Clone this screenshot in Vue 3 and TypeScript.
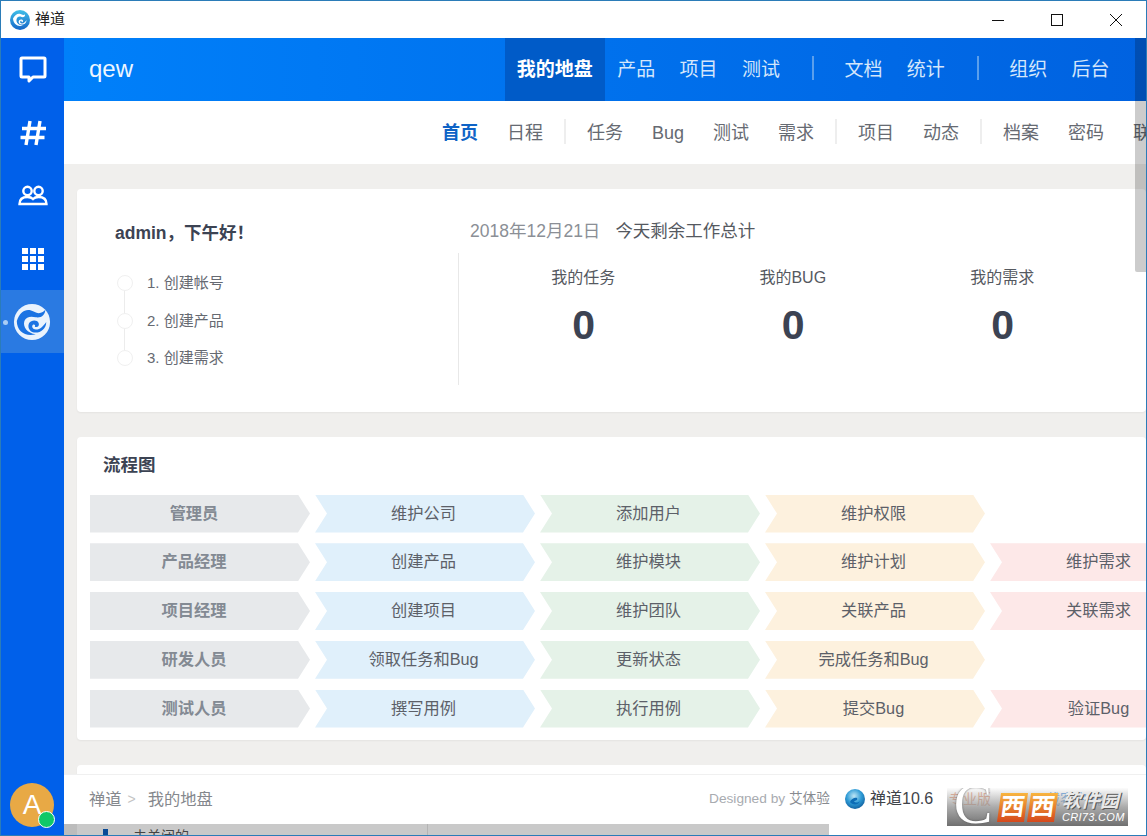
<script setup lang="ts">
interface FlowRow {
  role: string
  steps: string[]
}

const topNav = ['产品', '项目', '测试']
const topNav2 = ['文档', '统计']
const topNav3 = ['组织', '后台']

const subGroups: string[][] = [
  ['日程'],
  ['任务', 'Bug', '测试', '需求'],
  ['项目', '动态'],
  ['档案', '密码', '联系人'],
]

const todos = ['1. 创建帐号', '2. 创建产品', '3. 创建需求']

const stats = [
  { label: '我的任务', value: 0 },
  { label: '我的BUG', value: 0 },
  { label: '我的需求', value: 0 },
]

const flows: FlowRow[] = [
  { role: '管理员', steps: ['维护公司', '添加用户', '维护权限'] },
  { role: '产品经理', steps: ['创建产品', '维护模块', '维护计划', '维护需求'] },
  { role: '项目经理', steps: ['创建项目', '维护团队', '关联产品', '关联需求'] },
  { role: '研发人员', steps: ['领取任务和Bug', '更新状态', '完成任务和Bug'] },
  { role: '测试人员', steps: ['撰写用例', '执行用例', '提交Bug', '验证Bug'] },
]
</script>

<template>
  <div class="window">
    <!-- 标题栏 -->
    <div class="titlebar">
      <svg class="title-logo" viewBox="0 0 40 40">
        <defs>
          <linearGradient id="tl" x1="0" y1="0" x2="0" y2="1">
            <stop offset="0" stop-color="#3fc0e8" />
            <stop offset="1" stop-color="#1566c8" />
          </linearGradient>
        </defs>
        <circle cx="20" cy="20" r="20" fill="url(#tl)" />
        <path d="M6 17c4-8 10-11 15-9 3 1 5 3 9 1 1 4-3 6-7 5-5-2-9 0-10 5-1 7 6 13 14 11-9 5-20 0-21-13z" fill="#fff" />
        <path d="M33 20c0 7-6 10-11 9-4-1-6-5-4-8 2-3 7-3 8 0 1 2-1 4-3 3 1-2-1-3-2-2-2 2 0 5 3 5 4 0 7-4 9-7z" fill="#fff" />
      </svg>
      <span class="title-text">禅道</span>
      <div class="win-btns">
        <svg class="win-btn" viewBox="0 0 46 20"><path d="M17 10.5h12" stroke="#111" fill="none" /></svg>
        <svg class="win-btn" viewBox="0 0 46 20"><rect x="17.5" y="4.5" width="11" height="11" stroke="#111" fill="none" /></svg>
        <svg class="win-btn" viewBox="0 0 46 20"><path d="M17 4l12 12M29 4L17 16" stroke="#111" fill="none" /></svg>
      </div>
    </div>

    <div class="body">
      <!-- 左侧导航 -->
      <aside class="rail">
        <div class="rail-item">
          <svg width="30" height="30" viewBox="0 0 30 30" fill="none" stroke="#fff" stroke-width="3" stroke-linejoin="round">
            <path d="M4 3h22q1 0 1 1v17q0 1-1 1H15l-4 4v-4H4q-1 0-1-1V4q0-1 1-1z" />
          </svg>
        </div>
        <div class="rail-item">
          <svg width="30" height="30" viewBox="0 0 30 30" fill="none" stroke="#fff" stroke-width="3.4">
            <path d="M12 3L8 27M22 3l-4 24M4 10.500h24M2.500 19.500h24" />
          </svg>
        </div>
        <div class="rail-item">
          <svg width="30" height="30" viewBox="0 0 30 30" fill="none" stroke="#fff" stroke-width="2.400">
            <circle cx="9.500" cy="10" r="4.200" />
            <circle cx="20.500" cy="10" r="4.200" />
            <path d="M1.500 23c0-5 3-7 8-7 3 0 4.500 1 5.500 2 1-1 2.500-2 5.500-2 5 0 8 2 8 7z" />
          </svg>
        </div>
        <div class="rail-item">
          <div class="apps">
            <i v-for="n in 9" :key="n"></i>
          </div>
        </div>
        <div class="rail-item rail-active">
          <span class="rail-dot"></span>
          <svg width="38" height="38" viewBox="0 0 40 40">
            <circle cx="20" cy="20" r="19" fill="#eaf3fd" />
            <path d="M4 19c3-9 9-13 15-11 4 1 6 4 11 2 2-1 3-2 4-3 0 5-4 9-10 8-5-1-10-1-12 4-2 6 3 13 12 14-11 3-20-3-20-14z" fill="#1b73e3" />
            <path d="M35 20c0 8-7 12-13 11-5-1-7-6-5-10 2-3 8-4 10 0 1 3-1 5-4 4 1-2-1-3-2-2-2 2 0 5 3 5 5 0 8-4 11-8z" fill="#1b73e3" />
          </svg>
        </div>
        <div class="avatar">
          A
          <span class="online"></span>
        </div>
      </aside>

      <main class="main">
        <!-- 顶部导航 -->
        <header class="topbar">
          <span class="company">qew</span>
          <nav class="topnav">
            <a class="topnav-item topnav-active">我的地盘</a>
            <a v-for="item in topNav" :key="item" class="topnav-item">{{ item }}</a>
            <span class="topnav-sep"></span>
            <a v-for="item in topNav2" :key="item" class="topnav-item">{{ item }}</a>
            <span class="topnav-sep"></span>
            <a v-for="item in topNav3" :key="item" class="topnav-item">{{ item }}</a>
          </nav>
        </header>

        <!-- 二级导航 -->
        <nav class="subnav">
          <a class="subnav-item subnav-active">首页</a>
          <template v-for="(group, i) in subGroups" :key="i">
            <span v-if="i > 0" class="subnav-sep"></span>
            <a v-for="item in group" :key="item" class="subnav-item">{{ item }}</a>
          </template>
        </nav>

        <div class="content">
          <!-- 欢迎卡片 -->
          <section class="card welcome">
            <div class="welcome-left">
              <h3 class="hello">admin，下午好！</h3>
              <ul class="todo">
                <li v-for="t in todos" :key="t" class="todo-item">
                  <span class="todo-circle"></span>
                  {{ t }}
                </li>
              </ul>
            </div>
            <div class="welcome-right">
              <div class="today">
                <span class="today-date">2018年12月21日</span>
                <span class="today-text">今天剩余工作总计</span>
              </div>
              <div class="stats">
                <div v-for="s in stats" :key="s.label" class="stat">
                  <div class="stat-label">{{ s.label }}</div>
                  <div class="stat-value">{{ s.value }}</div>
                </div>
              </div>
            </div>
          </section>

          <!-- 流程图 -->
          <section class="card flow">
            <h3 class="flow-title">流程图</h3>
            <div v-for="row in flows" :key="row.role" class="flow-row">
              <div class="chev chev-role">{{ row.role }}</div>
              <div
                v-for="(step, i) in row.steps"
                :key="step"
                class="chev"
                :class="'chev-' + i"
              >{{ step }}</div>
            </div>
          </section>

          <section class="card next"></section>
        </div>

        <!-- 底部栏 -->
        <footer class="footer">
          <div class="crumbs">
            <span>禅道</span>
            <span class="crumb-arrow">&gt;</span>
            <span>我的地盘</span>
          </div>
          <div class="foot-right">
            <span class="designed">Designed by <b>艾体验</b></span>
            <svg class="ver-logo" viewBox="0 0 20 20">
              <defs>
                <radialGradient id="vl" cx="0.45" cy="0.35" r="0.75">
                  <stop offset="0" stop-color="#bfe6f5" />
                  <stop offset="0.5" stop-color="#2e9bd6" />
                  <stop offset="1" stop-color="#0a4f8f" />
                </radialGradient>
              </defs>
              <circle cx="10" cy="10" r="10" fill="url(#vl)" />
              <path d="M5 13c2 3 8 4 10-1-2 2-5 2-6 0 2 0 4-1 3-3-2-1-6 1-7 4z" fill="#0d6cb5" />
            </svg>
            <span class="version">禅道10.6</span>
            <span class="pro">专业版</span>
            <span class="download">下载客户端</span>
          </div>
        </footer>

        <!-- 底部遮罩下露出的内容 -->
        <div class="under">
          <span class="under-mark"></span>
          <span class="under-text">未关闭的</span>
          <span class="under-line"></span>
        </div>

        <div class="scrollbar"></div>
      </main>
    </div>

    <!-- 水印 -->
    <div class="mark">
      <span class="mark-c">C</span>
      <span class="mark-tiles"><b>西</b><b>西</b></span>
      <span class="mark-right">
        <span class="mark-cn">软件园</span>
        <span class="mark-en">CRI73.COM</span>
      </span>
    </div>
  </div>
</template>

<style>
html,
body {
  margin: 0;
  overflow: hidden;
}
</style>

<style scoped>
.window {
  position: relative;
  width: 1147px;
  height: 836px;
  box-sizing: border-box;
  border: 1px solid #2b7cb8;
  display: flex;
  flex-direction: column;
  overflow: hidden;
  background: #fff;
  font-family: 'Liberation Sans', 'Noto Sans CJK SC', sans-serif;
  color: #3c4353;
}

/* 标题栏 */
.titlebar {
  height: 37px;
  flex: none;
  display: flex;
  align-items: center;
  padding-left: 9px;
  background: #fff;
}
.title-logo {
  width: 20px;
  height: 20px;
}
.title-text {
  margin-left: 5px;
  font-size: 15px;
  line-height: 20px;
  margin-bottom: 2px;
  color: #222;
}
.win-btns {
  margin-left: auto;
  display: flex;
  margin-right: 7px;
  gap: 13px;
}
.win-btn {
  width: 46px;
  height: 20px;
}

.body {
  flex: 1;
  display: flex;
  min-height: 0;
}

/* 左侧导航 */
.rail {
  width: 63px;
  flex: none;
  background: #0060ea;
  display: flex;
  flex-direction: column;
  position: relative;
}
.rail-item {
  height: 63px;
  display: flex;
  align-items: center;
  justify-content: center;
  position: relative;
}
.rail-active {
  background: #2a7ae2;
}
.rail-active svg {
  margin-right: 1px;
}
.rail-dot {
  position: absolute;
  left: 2px;
  top: 30px;
  width: 5px;
  height: 5px;
  border-radius: 50%;
  background: #a9cdf5;
}
.apps {
  display: grid;
  grid-template-columns: repeat(3, 6px);
  gap: 2px;
}
.apps i {
  height: 6px;
  background: #fff;
}
.avatar {
  position: absolute;
  left: 9px;
  bottom: 8px;
  width: 44px;
  height: 44px;
  border-radius: 50%;
  background: #e8a945;
  color: #fff;
  font-size: 28px;
  line-height: 44px;
  text-align: center;
}
.online {
  position: absolute;
  right: -1px;
  bottom: -1px;
  width: 15px;
  height: 15px;
  border: 1px solid #fff;
  border-radius: 50%;
  background: #10c868;
}

.main {
  flex: 1;
  min-width: 0;
  position: relative;
  display: flex;
  flex-direction: column;
  overflow: hidden;
  background: #f0efed;
}

/* 顶部导航 */
.topbar {
  height: 63px;
  flex: none;
  display: flex;
  align-items: center;
  justify-content: space-between;
  padding-left: 25px;
  padding-right: 24px;
  background: linear-gradient(90deg, #0080fa 0%, #0062e0 100%);
  color: #fff;
}
.company {
  font-size: 24px;
  line-height: 30px;
  margin-bottom: 2px;
  font-weight: 500;
  color: #eef6ff;
}
.topnav {
  display: flex;
  align-items: stretch;
  height: 100%;
}
.topnav-item {
  display: flex;
  align-items: center;
  padding: 0 12px;
  margin-right: 0.4px;
  font-size: 19px;
  line-height: 26px;
  color: #d4e6fb;
}
.topnav-active {
  font-weight: 700;
  color: #fff;
  background: #005bc8;
}
.topnav-sep {
  align-self: center;
  width: 2px;
  height: 24px;
  margin: 0 18.5px 3px 19.5px;
  background: #5b9fec;
}

/* 二级导航 */
.subnav {
  height: 63px;
  flex: none;
  display: flex;
  align-items: center;
  justify-content: flex-start;
  padding-left: 366px;
  background: #fff;
  white-space: nowrap;
  box-sizing: border-box;
}
.subnav-item {
  flex: none;
  font-size: 18px;
  line-height: 24px;
  color: #666a72;
  padding: 0 12px;
  margin-right: 5px;
}
.subnav-active {
  font-weight: 700;
  color: #0e63c6;
}
.subnav-sep {
  flex: none;
  width: 2px;
  height: 25px;
  margin: 0 9px 3px 4px;
  background: #eeeeee;
}

.content {
  flex: 1;
  min-height: 0;
  padding: 25px 0 0 13px;
  display: flex;
  flex-direction: column;
  gap: 25px;
}
.card {
  background: #fff;
  border-radius: 4px;
  box-shadow: 0 1px 2px rgba(0, 0, 0, 0.05);
  flex: none;
}

/* 欢迎卡片 */
.welcome {
  height: 223px;
  display: flex;
  box-sizing: border-box;
  padding: 32px 0 0 38px;
}
.welcome-left {
  width: 343px;
  flex: none;
}
.hello {
  margin: 0;
  font-size: 17.5px;
  line-height: 24px;
  font-weight: 700;
  color: #3c4353;
}
.todo {
  list-style: none;
  margin: 26px 0 0;
  padding: 0;
  position: relative;
}
.todo::before {
  content: '';
  position: absolute;
  left: 9px;
  top: 14px;
  height: 72px;
  width: 1px;
  background: #ececec;
}
.todo-item {
  height: 37.5px;
  line-height: 24px;
  font-size: 15px;
  color: #666a72;
  display: flex;
  align-items: flex-start;
  gap: 14px;
  position: relative;
}
.todo-circle {
  width: 14px;
  height: 14px;
  margin: 4px 0 0 2px;
  border: 1px solid #f0f0f0;
  border-radius: 50%;
  background: #fff;
  flex: none;
}
.welcome-right {
  flex: 1;
  min-width: 0;
  margin-top: -2px;
}
.today {
  height: 28px;
  line-height: 24px;
  font-size: 17.5px;
  padding-left: 12px;
  display: flex;
  gap: 15px;
}
.today-date {
  color: #8b8f96;
}
.today-text {
  color: #55595f;
}
.stats {
  display: flex;
  margin-top: 6px;
  height: 132px;
  border-left: 1px solid #e8e8e8;
  padding-left: 20px;
}
.stat {
  width: 209.5px;
  text-align: center;
  padding-top: 14px;
}
.stat-label {
  font-size: 16px;
  line-height: 22px;
  color: #55595f;
  margin-right: 1px;
}
.stat-value {
  margin-top: 13px;
  font-size: 41px;
  line-height: 46px;
  font-weight: 700;
  color: #3c4353;
}

/* 流程图 */
.flow {
  height: 303px;
  box-sizing: border-box;
  padding: 16px 0 0 13px;
  overflow: hidden;
}
.flow-title {
  margin: 0 0 16.6px 13px;
  font-size: 17.5px;
  line-height: 25px;
  font-weight: 700;
  color: #3c4353;
}
.flow-row {
  display: flex;
  height: 38px;
  margin-bottom: 10.75px;
  gap: 5px;
}
.chev {
  width: 220px;
  flex: none;
  display: flex;
  align-items: center;
  justify-content: center;
  padding: 0 3px 2px 0;
  box-sizing: border-box;
  font-size: 16.25px;
  line-height: 24px;
  color: #5c6068;
  clip-path: polygon(0 0, calc(100% - 12px) 0, 100% 50%, calc(100% - 12px) 100%, 0 100%, 12px 50%);
}
.chev-role {
  font-weight: 700;
  color: #838a93;
  background: #e7e9eb;
  clip-path: polygon(0 0, calc(100% - 12px) 0, 100% 50%, calc(100% - 12px) 100%, 0 100%);
  padding-right: 12px;
}
.chev-0 {
  background: #e0f0fb;
}
.chev-1 {
  background: #e5f2e8;
}
.chev-2 {
  background: #fdf1de;
}
.chev-3 {
  background: #fde8e8;
}

.next {
  height: 80px;
}

/* 底部栏 */
.footer {
  position: absolute;
  left: 0;
  right: 0;
  bottom: 11px;
  height: 50px;
  display: flex;
  align-items: center;
  justify-content: space-between;
  background: #fff;
  border-top: 1px solid #f0f0f0;
  box-sizing: border-box;
  padding: 0 38px 0 25px;
}
.crumbs {
  display: flex;
  align-items: center;
  font-size: 16.25px;
  line-height: 24px;
  margin-bottom: 1px;
  color: #85888d;
}
.crumb-arrow {
  color: #c4c4c4;
  font-size: 14px;
  margin: 0 12px 0 6px;
}
.foot-right {
  display: flex;
  align-items: center;
  position: relative;
  margin-bottom: 1px;
  line-height: 24px;
}
.designed {
  font-size: 13.7px;
  color: #a8abb0;
  margin-right: 15px;
}
.designed b {
  font-weight: 400;
  color: #888b90;
}
.ver-logo {
  width: 20px;
  height: 20px;
  margin-right: 5px;
}
.version {
  font-size: 16px;
  color: #3f4349;
  width: 79px;
  white-space: nowrap;
}
.pro {
  font-size: 14px;
  color: #e9a88c;
  width: 83px;
}
.download {
  font-size: 14px;
  color: #6aa6e4;
  width: 76px;
  white-space: nowrap;
}
.under {
  position: absolute;
  left: 13px;
  right: 317px;
  bottom: 0;
  height: 11px;
  background: #c9c9c9;
  overflow: hidden;
  font-size: 14px;
  color: #444;
  display: flex;
  gap: 25px;
  padding-left: 26px;
}
.under-mark {
  width: 5px;
  height: 9px;
  margin-top: 5px;
  background: #0b4a96;
}
.under-text {
  line-height: 24px;
}
.under-line {
  position: absolute;
  left: 350px;
  top: 0;
  width: 1px;
  height: 11px;
  background: #b4b4b4;
}
.main::after {
  content: '';
  position: absolute;
  left: 0;
  right: 0;
  bottom: 0;
  height: 11px;
  background: linear-gradient(90deg, #bcbcbc 13px, #fff 13px);
  z-index: 0;
}
.footer,
.under,
.scrollbar {
  z-index: 1;
}
.scrollbar {
  position: absolute;
  top: 0;
  right: 0;
  width: 11px;
  height: 234px;
  background: rgba(0, 0, 0, 0.2);
  border-bottom-left-radius: 2px;
}

/* 水印 */
.mark {
  position: absolute;
  left: 946px;
  top: 787px;
  width: 181px;
  height: 38px;
  background: linear-gradient(180deg, rgba(235, 235, 235, 0.15) 0%, rgba(150, 150, 150, 0.8) 50%, #707070 100%);
  display: flex;
  align-items: center;
  z-index: 2;
  overflow: hidden;
}
.mark-c {
  width: 52px;
  flex: none;
  text-align: center;
  font-family: 'Liberation Serif', serif;
  font-size: 58px;
  line-height: 38px;
  margin-top: -7px;
  color: #fff;
  text-shadow: 0 0 2px #555;
}
.mark-tiles {
  display: flex;
  gap: 3px;
  flex: none;
}
.mark-tiles b {
  width: 27px;
  height: 29px;
  font-size: 24px;
  line-height: 28px;
  text-align: center;
  color: #fff;
  background: linear-gradient(180deg, #f8b53f, #d5481c);
  transform: skewX(-8deg);
}
.mark-right {
  display: flex;
  flex-direction: column;
  align-items: flex-start;
  margin-left: 6px;
  flex: none;
}
.mark-cn {
  font-size: 19px;
  line-height: 20px;
  font-weight: 700;
  font-style: italic;
  color: #e9e9e9;
  text-shadow: 1px 1px 0 #555;
}
.mark-en {
  font-size: 11px;
  line-height: 13px;
  font-style: italic;
  letter-spacing: 0.3px;
  color: #fff;
}
</style>
